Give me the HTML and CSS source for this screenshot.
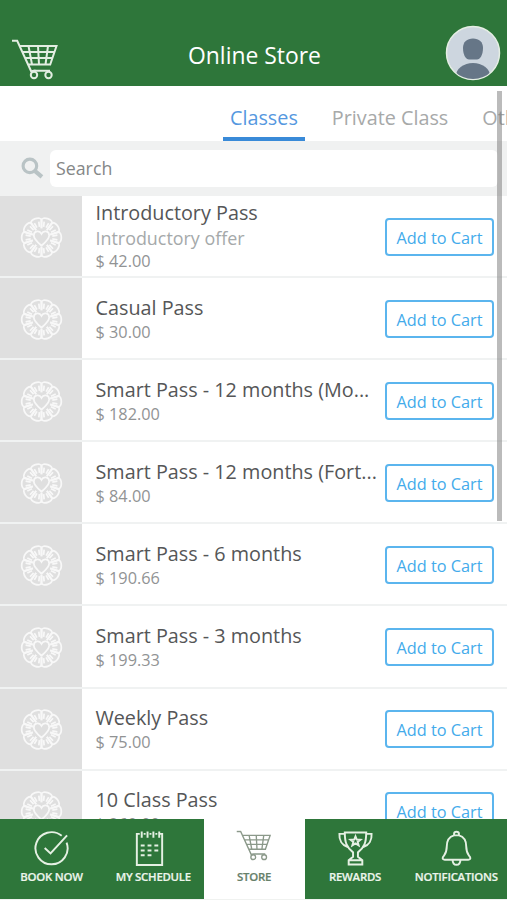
FILE: index.html
```html
<!DOCTYPE html>
<html lang="en">
<head>
<meta charset="utf-8">
<title>Online Store</title>
<link rel="stylesheet" href="styles.css">
</head>
<body>
<svg class="defs" aria-hidden="true">
  <defs>
    <symbol id="cart" viewBox="0 0 48 41">
      <path d="M1 1.8H6.2L20.5 33M8 7H45.5L39.2 25.5H17M10.8 13H43.5M13.4 19H41.4M17.5 7L21 25.5M27 7L28 25.5M37 7L34.5 25.5M20.5 33C21.5 31.500 24 31.500 25.500 31.800H39" />
      <circle cx="23" cy="36" r="3.200"/><circle cx="37.500" cy="36" r="3.200"/>
    </symbol>
    <symbol id="petal" viewBox="-21 -21 42 42" overflow="visible">
      <path d="M-2.800 -8.500L-5.500 -16C-5.800 -20.500 5.800 -20.500 5.500 -16L2.800 -8.500M-1.300 -10.500L-2.300 -15.500M1.300 -10.500L2.300 -15.500"/>
    </symbol>
    <symbol id="flower" viewBox="-21 -21 42 42">
      <g id="pair">
        <use href="#petal" x="-21" y="-21" width="42" height="42" transform="rotate(18)"/>
        <use href="#petal" x="-21" y="-21" width="42" height="42" transform="rotate(54)"/>
        <use href="#petal" x="-21" y="-21" width="42" height="42" transform="rotate(90)"/>
        <use href="#petal" x="-21" y="-21" width="42" height="42" transform="rotate(126)"/>
        <use href="#petal" x="-21" y="-21" width="42" height="42" transform="rotate(162)"/>
      </g>
      <use href="#pair" transform="rotate(180)"/>
      <path d="M0 8C-4 4.500 -7.500 1.500 -7.500 -2C-7.500 -6.500 -2 -7.500 0 -3.500C2 -7.500 7.500 -6.500 7.500 -2C7.500 1.500 4 4.500 0 8Z"/>
    </symbol>
  </defs>
</svg>
<div class="app">
  <header class="header">
    <svg class="header-cart"><use href="#cart"/></svg>
    <h1 class="title">Online Store</h1>
    <svg class="avatar" viewBox="0 0 56 56">
      <clipPath id="face"><circle cx="28" cy="28" r="26"/></clipPath>
      <circle cx="28" cy="28" r="26.500" fill="#cdd6df" stroke="#e5eee4" stroke-width="1.500"/>
      <g clip-path="url(#face)" fill="#667687"><path d="M18 23C18 17 22 13.500 28 13.500S38 17 38 23C38 30 35 34.500 32 34.500H24C21 34.500 18 30 18 23Z"/><ellipse cx="28" cy="51" rx="17" ry="13"/></g>
    </svg>
  </header>
  <nav class="tabs">
    <span class="tab tab-active">Classes</span>
    <span class="tab">Private Class</span>
    <span class="tab">Other</span>
  </nav>
  <div class="search">
    <svg class="search-icon" viewBox="0 0 22 22"><circle cx="8.500" cy="8.500" r="6.500"/><path d="M13.500 13.500L20 19" stroke-width="4"/></svg>
    <div class="search-field">Search</div>
  </div>
  <main class="list">
    <article class="row"><div class="thumb"><svg><use href="#flower"/></svg></div><div class="info info-offer"><h2>Introductory Pass</h2><p class="offer">Introductory offer</p><p>$ 42.00</p></div><button>Add to Cart</button></article>
    <article class="row"><div class="thumb"><svg><use href="#flower"/></svg></div><div class="info"><h2>Casual Pass</h2><p>$ 30.00</p></div><button>Add to Cart</button></article>
    <article class="row"><div class="thumb"><svg><use href="#flower"/></svg></div><div class="info"><h2>Smart Pass - 12 months (Mo...</h2><p>$ 182.00</p></div><button>Add to Cart</button></article>
    <article class="row"><div class="thumb"><svg><use href="#flower"/></svg></div><div class="info"><h2>Smart Pass - 12 months (Fort...</h2><p>$ 84.00</p></div><button>Add to Cart</button></article>
    <article class="row"><div class="thumb"><svg><use href="#flower"/></svg></div><div class="info"><h2>Smart Pass - 6 months</h2><p>$ 190.66</p></div><button>Add to Cart</button></article>
    <article class="row"><div class="thumb"><svg><use href="#flower"/></svg></div><div class="info"><h2>Smart Pass - 3 months</h2><p>$ 199.33</p></div><button>Add to Cart</button></article>
    <article class="row"><div class="thumb"><svg><use href="#flower"/></svg></div><div class="info"><h2>Weekly Pass</h2><p>$ 75.00</p></div><button>Add to Cart</button></article>
    <article class="row"><div class="thumb"><svg><use href="#flower"/></svg></div><div class="info"><h2>10 Class Pass</h2><p>$ 260.00</p></div><button>Add to Cart</button></article>
  </main>
  <nav class="bottom">
    <div class="item"><svg viewBox="0 0 38 38"><path d="M29.500 6A16.500 16.500 0 1 0 34.500 13M12 18.500L18 24L35 5.500"/></svg><span>BOOK NOW</span></div>
    <div class="item item-schedule"><svg viewBox="0 0 38 38"><path d="M9 4H6V36H32V4H30M13 4H15M19 4H21M25 4H27M11 1.500V8M17 1.500V8M23 1.500V8M29 1.500V8"/><path d="M10 16H14M17 16H21M24 16H28M10 21H14M17 21H21M24 21H28M10 26H14M17 26H21"/></svg><span>MY SCHEDULE</span></div>
    <div class="item item-active"><svg viewBox="0 0 48 41"><use href="#cart"/></svg><span>STORE</span></div>
    <div class="item"><svg viewBox="0 0 38 38"><path d="M8 2.500H30C30 13 28 18 21.500 23V27.500L26 31V35.500H12V31L16.500 27.500V23C10 18 8 13 8 2.500ZM8 4H2.500C2 10 5 15.500 11 17.500M30 4H35.500C36 10 33 15.500 27 17.500M12 31H26"/><path d="M19 6.500L20.300 9.800L24 10L21.200 12.200L22.200 15.800L19 13.800L15.800 15.800L16.800 12.200L14 10L17.700 9.800Z"/></svg><span>REWARDS</span></div>
    <div class="item"><svg viewBox="0 0 38 38"><path d="M16.500 5.500V4C16.500 1 21.500 1 21.500 4V5.500C27 7 29 11.500 29 17C29 24 31 25 33 28C33.500 29.500 33 30.500 31 30.500H7C5 30.500 4.500 29.500 5 28C7 25 9 24 9 17C9 11.500 11 7 16.500 5.500ZM16.500 5.500H21.500M15 30.500C15 37.500 23 37.500 23 30.500"/></svg><span>NOTIFICATIONS</span></div>
  </nav>
  <div class="scrollbar"></div>
</div>
</body>
</html>
```
FILE: styles.css
```css
* { box-sizing: border-box; }
body { margin: 0; font-family: "Open Sans", "Noto Sans", sans-serif; background: #fff; }
h1, h2, p { margin: 0; font-weight: 400; white-space: nowrap; }
svg { display: block; flex: none; fill: none; }
.defs { position: absolute; width: 0; height: 0; }
.app { position: relative; width: 507px; height: 900px; overflow: hidden; display: flex; flex-direction: column; }
.header { flex: none; height: 86px; background: #2e763a; display: flex; justify-content: space-between; padding: 25px 6px 0 11px; }
.header-cart { width: 48px; height: 41px; margin-top: 14px; stroke: #e3eee2; stroke-width: 2; }
.title { color: #fff; font-size: 22.900px; line-height: 30px; margin: 16px 0 0 5px; }
.avatar { width: 56px; height: 56px; }
.tabs { flex: none; height: 55px; display: flex; padding-left: 223px; gap: 20px; overflow: hidden; }
.tab { flex: none; height: 55px; padding: 0 7px; color: #a7a9a9; font-size: 19.800px; line-height: 63px; }
.tab-active { color: #5598df; border-bottom: 4px solid #398ad8; }
.search { flex: none; height: 55px; background: #f0f1f1; display: flex; align-items: center; padding: 0 9px 0 21px; gap: 6px; }
.search-icon { width: 23px; height: 23px; stroke: #b9c3c5; stroke-width: 3; }
.search-field { flex: 1; height: 37px; border-radius: 6px; background: #fff; color: #858787; font-size: 17.800px; line-height: 36px; padding-left: 6px; }
.list { flex: 1; min-height: 0; overflow: hidden; }
.row { height: 82.100px; display: flex; align-items: center; border-bottom: 2px solid #f0f2f2; padding-right: 13px; }
.thumb { flex: none; width: 82px; height: 100%; background: #dfdfdf; display: flex; align-items: center; justify-content: center; }
.thumb svg { width: 43px; height: 43px; margin: 2px 0 0 1px; stroke: #f8f8f8; stroke-width: 1.700; }
.info { flex: 1; min-width: 0; padding: 0 0 0 13.500px; }
.info h2 { color: #555657; font-size: 19.800px; line-height: 27px; }
.info p { color: #919394; font-size: 16.300px; line-height: 22px; }
.info-offer { padding: 0 0 1px 13.500px; }
.info-offer h2 { line-height: 26px; }
.info-offer .offer { color: #a5a9aa; font-size: 17.900px; line-height: 24px; }
.row button { flex: none; width: 109px; height: 38px; margin-top: 1px; padding: 0; border: 2px solid #5bb5ee; border-radius: 4px; background: #fff; color: #43abeb; font: 16.300px/34px "Open Sans", sans-serif; padding-top: 1px; }
.bottom { flex: none; height: 81px; display: grid; grid-template-columns: 103px 100.500px 101px 101px 101.500px; background: #2e763a; border-bottom: 1px solid #f0f2f0; }
.item { display: flex; flex-direction: column; align-items: center; color: #edf5ec; padding-top: 11px; min-width: 0; }
.item svg { width: 37px; height: 37px; stroke: #e5f0e3; stroke-width: 2; }
.item span { font-size: 11.400px; font-weight: 600; letter-spacing: -.25px; -webkit-text-stroke: .2px currentColor; line-height: 18px; margin-top: 1px; white-space: nowrap; }
.item-schedule svg { margin-left: -8px; }
.item-active { background: #fff; color: #66806a; }
.item-active svg { width: 36px; height: 31px; margin: 0 0 6px; stroke: #8b998a; stroke-width: 1.800; }
.scrollbar { position: absolute; left: 497px; top: 91px; width: 5px; height: 430px; background: rgba(120, 120, 120, .5); }
```
